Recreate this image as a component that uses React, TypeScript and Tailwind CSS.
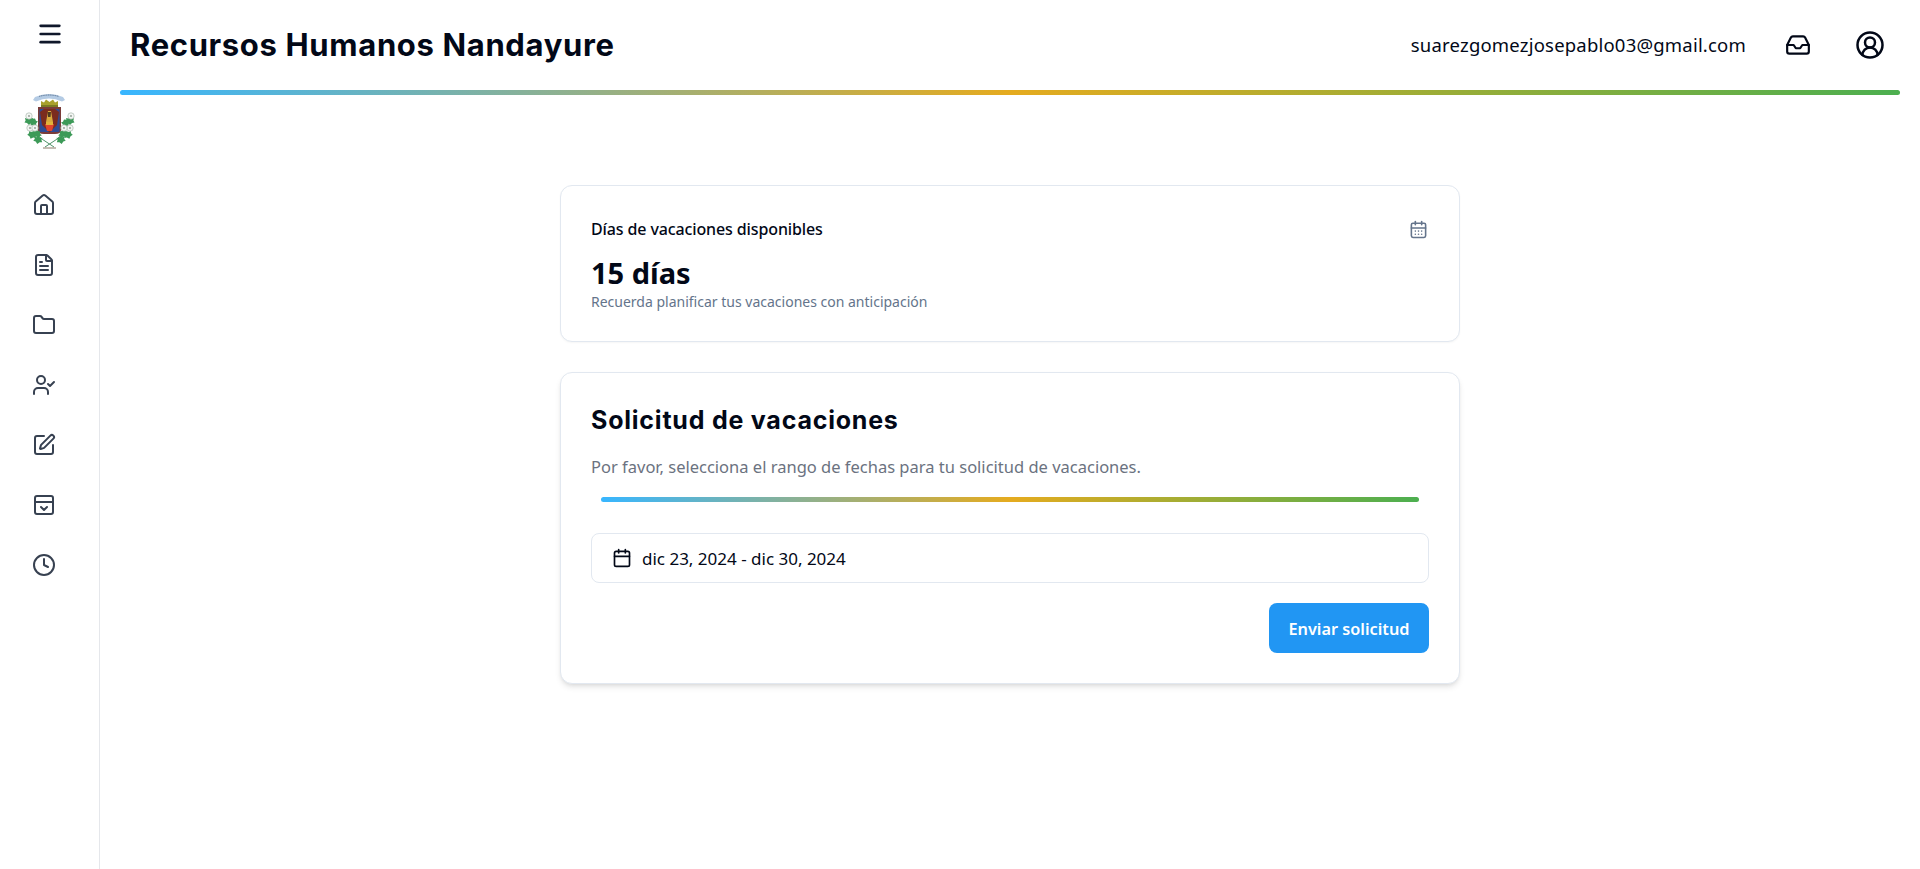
import { Menu, House, FileText, Folder, UserCheck, SquarePen, Clock, Inbox, CircleUserRound, Calendar, CalendarDays } from 'lucide-react';

const sideIcons = [House, FileText, Folder, UserCheck, SquarePen];

function ArchiveDown() {
  return (
    <svg width="24" height="24" viewBox="0 0 24 24" fill="none" stroke="currentColor" strokeWidth={2} strokeLinecap="round" strokeLinejoin="round">
      <rect x="3" y="3" width="18" height="18" rx="2" />
      <path d="M3 9h18" />
      <path d="m9 14 3 3 3-3" />
    </svg>
  );
}

function Leaf({ x, y, r = 0 }: { x: number; y: number; r?: number }) {
  return (
    <path
      transform={`translate(${x} ${y}) rotate(${r})`}
      d="M0 -4 L2 -2.5 L4 -3 L3.4 -0.5 L4.5 1.5 L2 2 L0 4 L-2 2 L-4.5 1.5 L-3.4 -0.5 L-4 -3 L-2 -2.5Z"
      fill="#3d9a58"
    />
  );
}

function Flower({ x, y }: { x: number; y: number }) {
  return (
    <g>
      <circle cx={x} cy={y} r="3.2" fill="#f4f6f4" stroke="#9fb0a4" strokeWidth="0.6" />
      <circle cx={x} cy={y} r="0.9" fill="#8d9a90" />
    </g>
  );
}

function Crest() {
  return (
    <svg width="52" height="58" viewBox="0 0 52 58">
      {/* ribbon */}
      <path d="M9 8 L12 9.5 Q25 3.5 38 9.5 L41 8 L39 5 Q25 -1 11 5Z" fill="#b4cbe4" />
      <path d="M15 4.5 Q25 1.5 35 4.5" stroke="#5d7694" strokeWidth="1" fill="none" strokeDasharray="1.2 0.6" />
      {/* crown */}
      <path d="M17 14 L17 9 L20 10.5 L22 7.5 L25.5 10 L29 7.5 L31 10.5 L34 9 L34 14Z" fill="#a8a02c" />
      <rect x="17" y="13" width="17" height="2" fill="#7c7a24" />
      {/* shield */}
      <path d="M14 15 H37 V38 Q37 42 31 42 H20 Q14 42 14 38Z" fill="#7a3c38" />
      <rect x="15.5" y="17" width="20" height="23" rx="1" fill="#2f4b95" />
      <path d="M16 20 L20 17 H31 L35 20 L33 33 L25.5 40.5 L18 33Z" fill="#7b2c1e" />
      <path d="M24 19 H27 L29 30 H22Z" fill="#d9aa3c" />
      <path d="M23.5 20 H27 L26.5 25 H24Z" fill="#4f3a20" />
      <path d="M21 32 H30 L28 39 H23Z" fill="#e0452e" />
      <path d="M22 30 H29 V33 H22Z" fill="#e4b43a" />
      {/* stems */}
      <path d="M10 40 Q18 48 30 55 M41 40 Q33 48 21 55" stroke="#4f9268" strokeWidth="1" fill="none" />
      <path d="M19 56 H32" stroke="#8a7a68" strokeWidth="1" />
      {/* leaves */}
      <Leaf x={5} y={29} />
      <Leaf x={9} y={30} r={30} />
      <Leaf x={8} y={43} r={20} />
      <Leaf x={13} y={42} r={50} />
      <Leaf x={14} y={48} r={10} />
      <Leaf x={46} y={29} />
      <Leaf x={42} y={31} r={-30} />
      <Leaf x={44} y={43} r={-20} />
      <Leaf x={39} y={42} r={-50} />
      <Leaf x={37} y={48} r={-10} />
      {/* flowers */}
      <Flower x={5} y={24} />
      <Flower x={47} y={24} />
      <Flower x={6} y={36} />
      <Flower x={46} y={36} />
      <Flower x={11} y={36} />
      <Flower x={40} y={36} />
    </svg>
  );
}

function GradientBar({ className }: { className: string }) {
  return <div className={`h-[5px] rounded-full bg-linear-to-r/srgb from-[#38b6ff] via-[#e5ab1f] to-[#4caf50] ${className}`} />;
}

export default function App() {
  return (
    <div className="flex min-h-screen bg-white font-['Noto_Sans',sans-serif] text-[#020817]">
      {/* Sidebar */}
      <aside className="w-[100px] shrink-0 border-r border-[#e5e7eb] flex flex-col">
        <div className="h-[68px] flex items-center justify-center">
          <Menu size={28} strokeWidth={2.3} className="text-[#0f172a]" />
        </div>
        <div className="h-[80px] mt-[24px] pl-[24px] flex items-start">
          <Crest />
        </div>
        <nav className="mt-[21px] pl-[32px] flex flex-col gap-[36px] text-[#374151]">
          {sideIcons.map((Icon, i) => (
            <Icon key={i} size={24} strokeWidth={2} />
          ))}
          <ArchiveDown />
          <Clock size={24} strokeWidth={2} />
        </nav>
      </aside>

      <div className="flex-1 min-w-0">
        {/* Header */}
        <header className="px-[20px]">
          <div className="h-[90px] flex items-center justify-between pl-[10px] pr-[15px]">
            <h1 className="font-['Inter',sans-serif] font-bold text-[31px] tracking-[0.65px]">Recursos Humanos Nandayure</h1>
            <div className="flex items-center">
              <span className="text-[18.5px] tracking-[0.2px]">suarezgomezjosepablo03@gmail.com</span>
              <Inbox size={26} strokeWidth={2} className="ml-[39px]" />
              <CircleUserRound size={30} strokeWidth={2} className="ml-[44px]" />
            </div>
          </div>
          <GradientBar className="w-full" />
        </header>

        {/* Main */}
        <main className="w-[900px] mx-auto mt-[90px] flex flex-col gap-[30px]">
          <section className="h-[157px] rounded-xl border border-[#e2e8f0] bg-white px-[30px] pt-[31px] shadow-[0_1px_2px_rgba(0,0,0,0.04)]">
            <div className="flex items-center justify-between">
              <h3 className="text-[16px] leading-[24px] font-medium tracking-[-0.12px]">Días de vacaciones disponibles</h3>
              <CalendarDays size={19} strokeWidth={2} className="text-[#64748b] mr-[1px]" />
            </div>
            <p className="mt-[16px] text-[29px] leading-[32px] font-bold">15 días</p>
            <p className="mt-[4px] text-[14px] leading-[18px] text-[#64748b]">Recuerda planificar tus vacaciones con anticipación</p>
          </section>

          <section className="h-[312px] rounded-xl border border-[#e2e8f0] bg-white px-[30px] pt-[31px] shadow-[0_4px_6px_-1px_rgba(0,0,0,0.1),0_2px_4px_-2px_rgba(0,0,0,0.1)]">
            <h2 className="font-['Inter',sans-serif] font-bold text-[25px] leading-[32px] tracking-[0.78px]">Solicitud de vacaciones</h2>
            <p className="mt-[19px] text-[16.5px] leading-[24px] text-[#6b7280]">Por favor, selecciona el rango de fechas para tu solicitud de vacaciones.</p>
            <GradientBar className="mx-[10px] mt-[18px]" />
            <div className="mt-[31px] h-[50px] rounded-lg border border-[#e2e8f0] flex items-center pl-[20px] gap-[10px]">
              <Calendar size={20} strokeWidth={2} />
              <span className="text-[17px] leading-[24px] pt-[2px]">dic 23, 2024 - dic 30, 2024</span>
            </div>
            <div className="mt-[20px] flex justify-end">
              <button className="h-[50px] w-[160px] rounded-lg bg-[#2196f3] text-white text-[16.3px] font-semibold pt-[2px]">Enviar solicitud</button>
            </div>
          </section>
        </main>
      </div>
    </div>
  );
}
